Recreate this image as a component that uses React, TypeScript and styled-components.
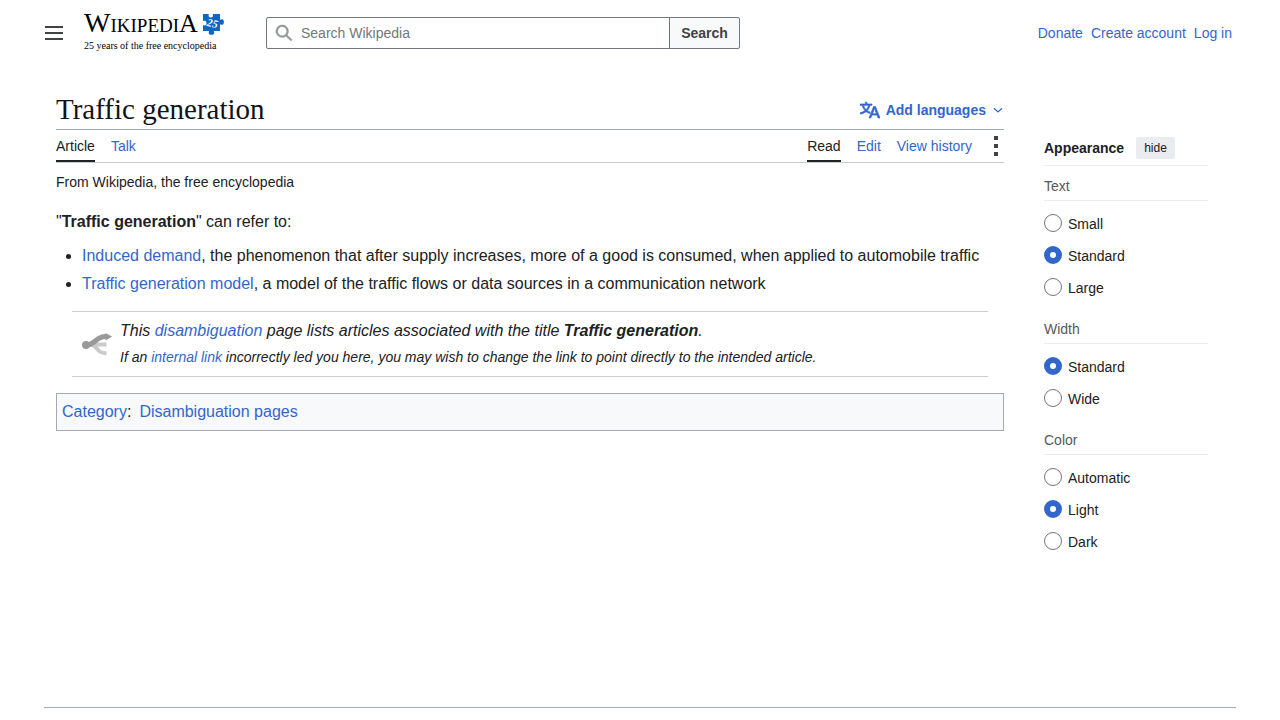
import React from "react";
import styled, { createGlobalStyle } from "styled-components";

const sans = `"Liberation Sans", Arial, sans-serif`;
const serif = `"Liberation Serif", "Times New Roman", serif`;
const color = {
  text: "#202122",
  heading: "#101418",
  subtle: "#54595d",
  link: "#3366cc",
  icon: "#404244",
  border: "#a2a9b1",
  borderSoft: "#c8ccd1",
  borderFaint: "#eaecf0",
  control: "#72777d",
  surface: "#f8f9fa",
};

const GlobalStyle = createGlobalStyle`
  *, *::before, *::after { box-sizing: border-box; }
  body {
    margin: 0;
    background: #fff;
    color: ${color.text};
    font-family: ${sans};
    font-size: 14px;
    line-height: 22px;
  }
  svg { flex-shrink: 0; }
`;

const Page = styled.div`
  display: flex;
  flex-direction: column;
  min-height: 100vh;
`;

const Link = styled.a`
  color: ${color.link};
  text-decoration: none;
  &:hover { text-decoration: underline; }
`;

const Header = styled.header`
  display: flex;
  align-items: center;
  height: 66px;
  padding: 0 48px 0 38px;
`;

const IconButton = styled.button`
  display: flex;
  align-items: center;
  justify-content: center;
  width: 32px;
  height: 32px;
  padding: 0;
  border: 0;
  background: none;
  color: ${color.icon};
  cursor: pointer;
`;

const Logo = styled.a`
  display: flex;
  flex-direction: column;
  width: 140px;
  margin-left: 14px;
  color: #000;
  font-family: ${serif};
  text-decoration: none;
`;

const Brand = styled.span`
  display: flex;
  align-items: flex-start;
  justify-content: space-between;
  height: 26px;
`;

const Wordmark = styled.span`
  font-size: 19px;
  line-height: 18px;
  white-space: nowrap;
`;

const Initial = styled.span<{ $size: number }>`
  font-size: ${(p) => p.$size}px;
`;

const Tagline = styled.span`
  font-size: 10px;
  line-height: 12px;
  white-space: nowrap;
`;

const SearchForm = styled.form`
  display: flex;
  flex: 0 1 474px;
  height: 32px;
  margin-left: 42px;
`;

const SearchField = styled.label`
  display: flex;
  flex: 1;
  align-items: center;
  gap: 8px;
  min-width: 0;
  padding-left: 8px;
  border: 1px solid ${color.control};
  border-radius: 2px 0 0 2px;
  color: #939597;
`;

const SearchInput = styled.input`
  flex: 1;
  min-width: 0;
  height: 30px;
  padding: 0;
  border: 0;
  outline: 0;
  background: none;
  color: ${color.text};
  font: 14px/22px ${sans};
  &::placeholder { color: ${color.control}; opacity: 1; }
`;

const SearchButton = styled.button`
  width: 71px;
  margin-left: -1px;
  padding: 0;
  border: 1px solid ${color.control};
  border-radius: 0 2px 2px 0;
  background: ${color.surface};
  color: ${color.icon};
  font: bold 14px/22px ${sans};
  cursor: pointer;
`;

const UserLinks = styled.nav`
  display: flex;
  gap: 8px;
  margin-left: auto;
  white-space: nowrap;
`;

const Body = styled.div`
  display: grid;
  flex: 1;
  grid-template-columns: minmax(0, 1fr) 164px;
  column-gap: 40px;
  align-items: start;
  margin: 0 44px;
  padding: 24px 28px 24px 12px;
`;

const TitleBar = styled.div`
  display: flex;
  align-items: center;
  justify-content: space-between;
  height: 40px;
  border-bottom: 1px solid ${color.border};
`;

const Title = styled.h1`
  margin: 0;
  padding-bottom: 2px;
  color: ${color.heading};
  font: normal 29px/36px ${serif};
`;

const LanguageButton = styled.button`
  display: flex;
  align-items: center;
  gap: 6px;
  padding: 0;
  border: 0;
  background: none;
  color: ${color.link};
  font: bold 14px/22px ${sans};
  cursor: pointer;
`;

const TabBar = styled.div`
  display: flex;
  justify-content: space-between;
  height: 33px;
  border-bottom: 1px solid ${color.borderSoft};
`;

const Tabs = styled.nav`
  display: flex;
  gap: 16px;
`;

const Tab = styled.a<{ $active?: boolean }>`
  height: 32px;
  padding-top: 5px;
  border-bottom: 2px solid ${(p) => (p.$active ? color.text : "transparent")};
  color: ${(p) => (p.$active ? color.text : color.link)};
  text-decoration: none;
`;

const MoreButton = styled(IconButton)`
  width: 16px;
`;

const Source = styled.div`
  margin-top: 8px;
`;

const Article = styled.div`
  margin-top: 16px;
  font-size: 16px;
  line-height: 26px;
`;

const Paragraph = styled.p`
  margin: 0;
`;

const List = styled.ul`
  margin: 8px 0 0;
  padding-left: 26px;
`;

const Item = styled.li`
  margin-bottom: 2px;
`;

const Notice = styled.div`
  display: flex;
  align-items: center;
  gap: 8px;
  height: 66px;
  margin: 14px 16px 0;
  padding-left: 10px;
  border: solid ${color.borderSoft};
  border-width: 1px 0;
  font-style: italic;
`;

const NoticeHint = styled.div`
  font-size: 14px;
`;

const Categories = styled.div`
  display: flex;
  gap: 8px;
  margin-top: 16px;
  padding: 5px;
  border: 1px solid ${color.border};
  background: ${color.surface};
`;

const Sidebar = styled.aside`
  margin-top: 40px;
`;

const SidebarHeader = styled.div`
  display: flex;
  align-items: center;
  gap: 12px;
  padding: 7px 0 6px;
  border-bottom: 1px solid ${color.borderFaint};
  font-weight: bold;
`;

const HideButton = styled.button`
  height: 22px;
  padding: 0 8px;
  border: 0;
  border-radius: 2px;
  background: ${color.borderFaint};
  color: ${color.text};
  font: 12px/22px ${sans};
  cursor: pointer;
`;

const Group = styled.fieldset`
  min-width: 0;
  margin: 0 0 6px;
  padding: 0;
  border: 0;
`;

const Legend = styled.legend`
  width: 100%;
  margin-bottom: 6px;
  padding: 9px 0 3px;
  border-bottom: 1px solid ${color.borderFaint};
  color: ${color.subtle};
`;

const Option = styled.label`
  display: flex;
  align-items: center;
  gap: 6px;
  height: 32px;
`;

const OptionText = styled.span`
  padding-top: 2px;
`;

const Radio = styled.input`
  width: 18px;
  height: 18px;
  margin: 0;
  appearance: none;
  border: 1px solid ${color.control};
  border-radius: 50%;
  background: #fff;
  &:checked { border: 6px solid ${color.link}; }
`;

const Footer = styled.footer`
  height: 13px;
  margin: 0 44px;
  border-top: 1px solid ${color.border};
`;

const MenuIcon = () => (
  <svg width="20" height="20" viewBox="0 0 20 20" fill="currentColor" aria-hidden="true">
    <path d="M1 3h18v2H1zm0 6h18v2H1zm0 6h18v2H1z" />
  </svg>
);

const SearchIcon = () => (
  <svg width="18" height="18" viewBox="0 0 20 20" fill="currentColor" stroke="currentColor" strokeWidth="0.4" aria-hidden="true">
    <path
      fillRule="evenodd"
      d="M12.2 13.6a7 7 0 1 1 1.4-1.4l5.4 5.4-1.4 1.4zM3 8a5 5 0 1 0 10 0A5 5 0 0 0 3 8"
    />
  </svg>
);

const LanguageIcon = () => (
  <svg width="20" height="20" viewBox="0 0 20 20" fill="currentColor" stroke="currentColor" strokeWidth="0.7" aria-hidden="true">
    <path d="M20 18h-1.44a.6.6 0 0 1-.4-.12.8.8 0 0 1-.23-.31L17 15h-5l-1 2.54a.8.8 0 0 1-.22.3.6.6 0 0 1-.4.14H9l4.550-11.470h1.890zm-3.530-4.310L14.890 9.500a12 12 0 0 1-.390-1.240q-.090.370-.190.690l-.190.560-1.580 4.190zm-6.300-1.580a13.400 13.400 0 0 1-2.910-1.410 11.460 11.460 0 0 0 2.810-5.370H12V4H7.310a4 4 0 0 0-.2-.56C6.870 2.790 6.600 2 6.600 2l-1.470.5s.4.890.6 1.500H0v1.330h2.150A11.230 11.230 0 0 0 5 10.700a17.200 17.200 0 0 1-5 2.100q.560.820.870 1.380a23.300 23.300 0 0 0 5.220-2.510 15.600 15.600 0 0 0 3.560 1.770zM3.630 5.330h4.910a8.100 8.100 0 0 1-2.450 4.450 9.100 9.100 0 0 1-2.460-4.450" />
  </svg>
);

const ChevronIcon = () => (
  <svg width="12" height="12" viewBox="0 0 12 12" fill="none" stroke="currentColor" strokeWidth="1.2" aria-hidden="true">
    <path d="M2 4.200L6 8l4-3.800" />
  </svg>
);

const MoreIcon = () => (
  <svg width="20" height="20" viewBox="0 0 20 20" fill="currentColor" aria-hidden="true">
    <path d="M8 0h4v4H8zm0 8h4v4H8zm0 8h4v4H8z" />
  </svg>
);

const PuzzleIcon = () => (
  <svg width="22" height="22" viewBox="0 1 22 22" aria-hidden="true">
    <path
      fill="#1067bf"
      d="M1 1h5.6c.6.7-.5 1.500.2 2.500.9 1.200 3.200 1.200 4 0 .7-1-.4-1.800.2-2.500h7v5.600c.9.400 1.300-.400 2.200-.300 2.300.400 2.300 5.200 0 5.500-.9.100-1.300-.600-2.200-.300V18h-6c-.5.700.4 1.200.200 2.200-.5 2-5 2-5.500 0-.2-1 .7-1.500.2-2.200H1v-5.600c.7-.5 1.500.4 2.500-.2 1.400-.9 1.400-3.500 0-4.300-1-.6-1.800.3-2.500-.2z"
    />
    <text x="5" y="14" fill="#fff" fontFamily={serif} fontSize="11" fontStyle="italic" fontWeight="bold" transform="rotate(12 10 10)">
      25
    </text>
  </svg>
);

const DisambiguationIcon = () => (
  <svg width="30" height="24" viewBox="0 0 30 24" aria-hidden="true">
    <g fill="none" stroke="#cacaca" strokeWidth="4">
      <path d="M8 12.500H24.500" />
      <path d="M8 12.500c8 0 5 8.700 16.500 8.700" />
    </g>
    <path fill="none" stroke="#999" strokeWidth="5" d="M4 13c10 0 9-8.500 20-8.500" />
    <circle cx="4" cy="13" r="4" fill="#999" />
    <path fill="#999" d="M23.500 1l6.500 3.500-6.500 4z" />
  </svg>
);

const settings = [
  { name: "Text", options: ["Small", "Standard", "Large"], selected: "Standard" },
  { name: "Width", options: ["Standard", "Wide"], selected: "Standard" },
  { name: "Color", options: ["Automatic", "Light", "Dark"], selected: "Light" },
];

export default function App() {
  return (
    <Page>
      <GlobalStyle />
      <Header>
        <IconButton type="button" aria-label="Main menu">
          <MenuIcon />
        </IconButton>
        <Logo href="#home">
          <Brand>
            <Wordmark>
              <Initial $size={28}>W</Initial>IKIPEDI<Initial $size={26}>A</Initial>
            </Wordmark>
            <PuzzleIcon />
          </Brand>
          <Tagline>25 years of the free encyclopedia</Tagline>
        </Logo>
        <SearchForm role="search" onSubmit={(e) => e.preventDefault()}>
          <SearchField>
            <SearchIcon />
            <SearchInput type="search" aria-label="Search Wikipedia" placeholder="Search Wikipedia" />
          </SearchField>
          <SearchButton type="submit">Search</SearchButton>
        </SearchForm>
        <UserLinks aria-label="Personal tools">
          <Link href="#donate">Donate</Link>
          <Link href="#create-account">Create account</Link>
          <Link href="#login">Log in</Link>
        </UserLinks>
      </Header>

      <Body>
        <main>
          <TitleBar>
            <Title>Traffic generation</Title>
            <LanguageButton type="button">
              <LanguageIcon />
              Add languages
              <ChevronIcon />
            </LanguageButton>
          </TitleBar>
          <TabBar>
            <Tabs aria-label="Namespaces">
              <Tab href="#article" $active>Article</Tab>
              <Tab href="#talk">Talk</Tab>
            </Tabs>
            <Tabs aria-label="Views">
              <Tab href="#read" $active>Read</Tab>
              <Tab href="#edit">Edit</Tab>
              <Tab href="#history">View history</Tab>
              <MoreButton type="button" aria-label="Tools">
                <MoreIcon />
              </MoreButton>
            </Tabs>
          </TabBar>
          <Source>From Wikipedia, the free encyclopedia</Source>
          <Article>
            <Paragraph>
              "<b>Traffic generation</b>" can refer to:
            </Paragraph>
            <List>
              <Item>
                <Link href="#induced-demand">Induced demand</Link>, the phenomenon that after supply increases, more of a
                good is consumed, when applied to automobile traffic
              </Item>
              <Item>
                <Link href="#traffic-generation-model">Traffic generation model</Link>, a model of the traffic flows or
                data sources in a communication network
              </Item>
            </List>
            <Notice role="note">
              <DisambiguationIcon />
              <div>
                <div>
                  This <Link href="#disambiguation">disambiguation</Link> page lists articles associated with the title{" "}
                  <b>Traffic generation</b>.
                </div>
                <NoticeHint>
                  If an <Link href="#links">internal link</Link> incorrectly led you here, you may wish to change the
                  link to point directly to the intended article.
                </NoticeHint>
              </div>
            </Notice>
            <Categories>
              <span>
                <Link href="#category">Category</Link>:
              </span>
              <Link href="#disambiguation-pages">Disambiguation pages</Link>
            </Categories>
          </Article>
        </main>

        <Sidebar aria-label="Appearance">
          <SidebarHeader>
            Appearance
            <HideButton type="button">hide</HideButton>
          </SidebarHeader>
          {settings.map((group) => (
            <Group key={group.name}>
              <Legend>{group.name}</Legend>
              {group.options.map((option) => (
                <Option key={option}>
                  <Radio type="radio" name={group.name} value={option} defaultChecked={option === group.selected} />
                  <OptionText>{option}</OptionText>
                </Option>
              ))}
            </Group>
          ))}
        </Sidebar>
      </Body>
      <Footer />
    </Page>
  );
}
